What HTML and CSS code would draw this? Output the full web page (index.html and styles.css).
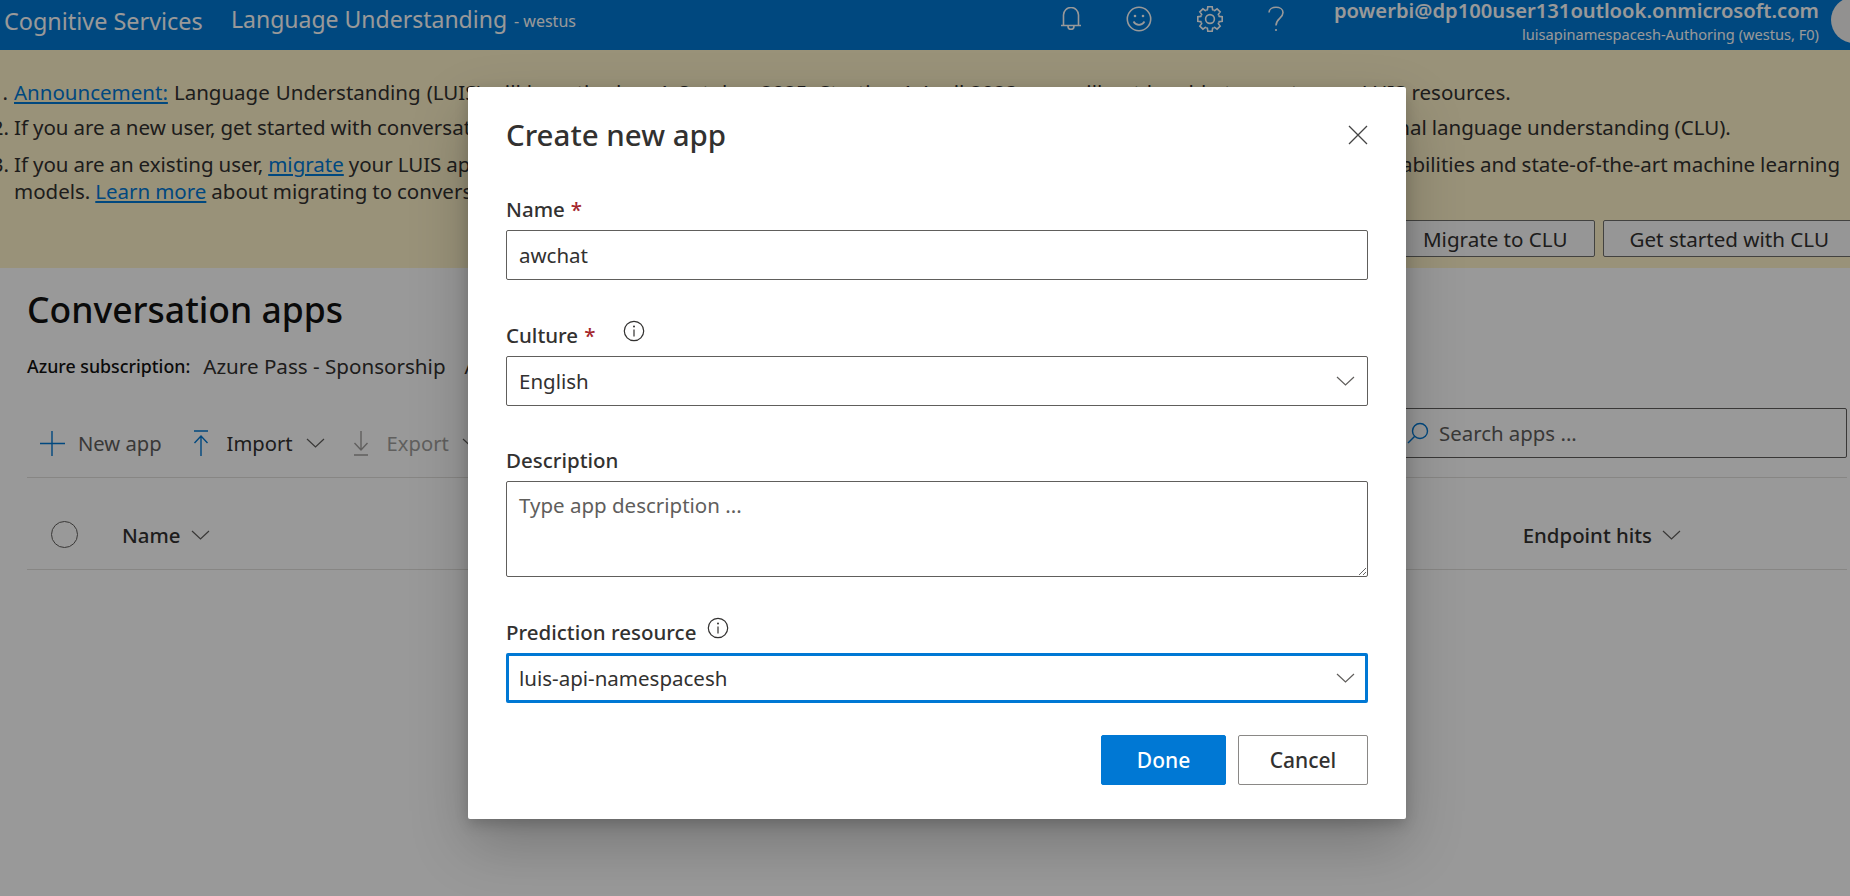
FILE: index.html
```html
<!DOCTYPE html>
<html>
<head>
  <meta charset="utf-8">
  <title>Language Understanding</title>
  <link rel="stylesheet" href="styles.css">
</head>
<body>
  <header class="topbar">
    <span class="brand">Cognitive Services</span>
    <span class="product">Language Understanding</span>
    <span class="region">- westus</span>
    <div class="top-icons">
      <svg class="top-icon" width="20" height="23" viewBox="0 0 20 23"><path d="M2.500 18V8a7.500 7.500 0 0 1 15 0v10M0 18.500h20M7 19c0 4.500 6 4.500 6 0"/></svg>
      <svg class="top-icon" width="26" height="26" viewBox="0 0 26 26"><circle cx="13" cy="13" r="11.700"/><path d="M7.500 15.500c2.500 4.500 8.500 4.500 11 0"/><circle class="dot" cx="9" cy="10" r="1.300"/><circle class="dot" cx="17" cy="10" r="1.300"/></svg>
      <svg class="top-icon" width="26" height="26" viewBox="-13 -13 26 26">
        <defs><path id="tooth" d="M-3.600-8.700L-2.600-9.200-2.200-12.200H2.200L2.600-9.200 3.600-8.700"/></defs>
        <use href="#tooth"/><use href="#tooth" transform="rotate(45)"/><use href="#tooth" transform="rotate(90)"/><use href="#tooth" transform="rotate(135)"/><use href="#tooth" transform="rotate(180)"/><use href="#tooth" transform="rotate(225)"/><use href="#tooth" transform="rotate(270)"/><use href="#tooth" transform="rotate(315)"/>
        <circle cx="0" cy="0" r="4.400"/>
      </svg>
      <svg class="top-icon" width="16" height="26" viewBox="0 0 16 26"><path d="M1 6.500c0-7 14-7 14 0 0 6-7 6-7 13"/><circle class="dot" cx="8" cy="24" r="1.100"/></svg>
    </div>
    <div class="account">
      <div class="account-mail">powerbi@dp100user131outlook.onmicrosoft.com</div>
      <div class="account-res">luisapinamespacesh-Authoring (westus, F0)</div>
    </div>
    <div class="avatar"></div>
  </header>

  <section class="banner">
    <ol class="notes">
      <li><a href="#">Announcement:</a> Language Understanding (LUIS) will be retired on 1 October 2025. Starting 1 April 2023, you will not be able to create new LUIS resources.</li>
      <li class="note-tight">If you are a new user, get started with conversational AI through Azure AI Language, the successor service to LUIS, and its brand new conversational language understanding (CLU).</li>
      <li class="note-tight">If you are an existing user, <a href="#">migrate</a> your LUIS applications to conversational language understanding to benefit from much improved product capabilities and state-of-the-art machine learning models. <a href="#">Learn more</a> about migrating to conversational language understanding.</li>
    </ol>
    <div class="banner-actions">
      <button class="banner-btn">Migrate to CLU</button>
      <button class="banner-btn">Get started with CLU</button>
    </div>
  </section>

  <main class="content">
    <h1 class="page-title">Conversation apps</h1>
    <div class="subscription">
      <b>Azure subscription:</b>
      <span>Azure Pass - Sponsorship</span>
      <span class="authoring">Authoring resource</span>
    </div>
    <div class="toolbar">
      <div class="tool tool-first">
        <svg class="tool-icon blue" width="26" height="26" viewBox="0 0 26 26"><path d="M13 1v25M1 13.500h25"/></svg>
        <span>New app</span>
      </div>
      <div class="tool">
        <svg class="tool-icon blue" width="16" height="26" viewBox="0 0 16 26"><path d="M1 1h14M8 26V6M1.500 13L8 6l6.500 7"/></svg>
        <span class="tool-dark">Import</span>
        <svg class="chev" width="19" height="10" viewBox="0 0 19 10"><path d="M1 1l8.500 8L18 1"/></svg>
      </div>
      <div class="tool disabled">
        <svg class="tool-icon" width="16" height="26" viewBox="0 0 16 26"><path d="M8 1v19M1.500 13L8 20l6.500-7M1 25h14"/></svg>
        <span>Export</span>
        <svg class="chev" width="19" height="10" viewBox="0 0 19 10"><path d="M1 1l8.500 8L18 1"/></svg>
      </div>
      <div class="search">
        <svg class="search-icon" width="22" height="22" viewBox="0 0 22 22"><circle cx="13" cy="9" r="7.500"/><path d="M7.500 14.500L1 21"/></svg>
        <span>Search apps ...</span>
      </div>
    </div>
    <div class="table-head">
      <span class="check"></span>
      <span class="col-name">Name</span>
      <svg class="chev small" width="19" height="10" viewBox="0 0 19 10"><path d="M1 1l8.500 8L18 1"/></svg>
      <span class="col-hits">Endpoint hits</span>
      <svg class="chev small" width="19" height="10" viewBox="0 0 19 10"><path d="M1 1l8.500 8L18 1"/></svg>
    </div>
  </main>

  <div class="overlay"></div>

  <div class="dialog">
    <div class="dialog-head">
      <h2>Create new app</h2>
      <svg class="close" width="20" height="20" viewBox="0 0 20 20"><path d="M1 1l18 18M19 1L1 19"/></svg>
    </div>
    <div class="field">
      <label class="field-label" for="appname">Name <em>*</em></label>
      <input class="control" id="appname" type="text" value="awchat">
    </div>
    <div class="field">
      <label class="field-label">Culture <em>*</em>
        <svg class="info info-far" width="22" height="22" viewBox="0 0 22 22"><circle cx="11" cy="11" r="9.700"/><path d="M11 9.500v7"/><circle class="dot" cx="11" cy="6.500" r="1"/></svg>
      </label>
      <div class="control select">English
        <svg class="chev" width="19" height="10" viewBox="0 0 19 10"><path d="M1 1l8.500 8L18 1"/></svg>
      </div>
    </div>
    <div class="field">
      <label class="field-label" for="appdesc">Description</label>
      <textarea class="control area" id="appdesc" placeholder="Type app description ..."></textarea>
    </div>
    <div class="field field-last">
      <label class="field-label">Prediction resource
        <svg class="info" width="22" height="22" viewBox="0 0 22 22"><circle cx="11" cy="11" r="9.700"/><path d="M11 9.500v7"/><circle class="dot" cx="11" cy="6.500" r="1"/></svg>
      </label>
      <div class="control select focused">luis-api-namespacesh
        <svg class="chev" width="19" height="10" viewBox="0 0 19 10"><path d="M1 1l8.500 8L18 1"/></svg>
      </div>
    </div>
    <div class="dialog-actions">
      <button class="btn primary">Done</button>
      <button class="btn">Cancel</button>
    </div>
  </div>
</body>
</html>
```

FILE: styles.css
```css
* {
  box-sizing: border-box;
}

html, body {
  height: 100%;
  margin: 0;
  overflow: hidden;
}

body {
  font-family: "Noto Sans", "Open Sans", sans-serif;
  background-color: #fff;
  color: #323130;
}

/* top bar */
.topbar {
  display: flex;
  align-items: center;
  height: 50px;
  padding: 0 0 8px 4px;
  background-color: #0078d4;
  color: #fff;
  overflow: hidden;
}

.brand {
  font-size: 23.400px;
  width: 227px;
}

.product {
  font-size: 23px;
  margin-top: -5px;
}

.region {
  font-size: 16px;
  margin-left: 7px;
}

.top-icons {
  display: flex;
  align-items: center;
  gap: 45px;
  margin-left: auto;
  margin-right: 50px;
  margin-top: -5px;
}

.top-icon {
  fill: none;
  stroke: #fff;
  stroke-width: 1.600;
}

.top-icon .dot {
  fill: #fff;
  stroke: none;
}

.account {
  text-align: right;
  margin-top: 6px;
}

.account-mail {
  font-size: 20.200px;
  font-weight: 600;
  line-height: 20px;
}

.account-res {
  font-size: 14.600px;
  line-height: 28px;
}

.avatar {
  flex: none;
  align-self: flex-start;
  width: 46px;
  height: 46px;
  margin-top: -3px;
  margin-left: 12px;
  margin-right: -27px;
  border-radius: 50%;
  background-color: #f3f2f1;
}

/* banner */
.banner {
  display: flex;
  flex-direction: column;
  height: 218px;
  padding: 29px 0 11px 14px;
  background-color: #fff3ca;
  overflow: hidden;
}

.notes {
  margin: 0;
  padding: 0;
  font-size: 20.500px;
  line-height: 27px;
}

.notes li {
  margin-bottom: 8px;
}

.notes li + li {
  margin-bottom: 10px;
}

.notes li:first-child {
  word-spacing: 0.700px;
}

.notes .note-tight {
  word-spacing: -0.400px;
}

.notes a {
  color: #0078d4;
}

.banner-actions {
  display: flex;
  justify-content: flex-end;
  gap: 8px;
  margin-top: auto;
  margin-right: -6px;
}

.banner-btn {
  height: 37px;
  padding: 0 26px;
  font: inherit;
  font-size: 20.600px;
  color: #323130;
  background-color: #fafafa;
  border: 1px solid #6f6e6c;
  border-radius: 2px;
}

/* page content */
.content {
  padding: 0 3px 0 27px;
}

.page-title {
  margin: 17px 0 0;
  font-size: 35.500px;
  line-height: 48px;
  font-weight: 500;
  color: #111;
}

.subscription {
  display: flex;
  align-items: center;
  height: 30px;
  margin-top: 18px;
  font-size: 20.600px;
  color: #323130;
}

.subscription b {
  font-size: 17.800px;
  font-weight: 500;
  color: #111;
  margin-right: 13px;
}

.authoring {
  margin-left: 19px;
}

.toolbar {
  display: flex;
  align-items: center;
  height: 70px;
  margin-top: 27px;
  padding-left: 12px;
  border-bottom: 1px solid #e1dfdd;
  font-size: 20.200px;
}

.tool {
  display: flex;
  align-items: center;
  margin-right: 28px;
  color: #605e5c;
}

.tool-first {
  margin-right: 31px;
}

.tool span {
  margin-left: 13px;
}

.tool .tool-dark {
  margin-left: 18px;
  color: #323130;
}

.tool-icon {
  fill: none;
  stroke-width: 1.400;
  stroke: #a19f9d;
}

.tool-icon.blue {
  stroke: #0078d4;
}

.disabled {
  color: #a19f9d;
}

.disabled span {
  margin-left: 18px;
}

.chev {
  flex: none;
  fill: none;
  stroke: #605e5c;
  stroke-width: 1.200;
}

.tool .chev {
  margin-left: 13px;
}

.search {
  display: flex;
  align-items: center;
  align-self: flex-start;
  width: 560px;
  height: 50px;
  margin-left: auto;
  padding-left: 119px;
  border: 1px solid #605e5c;
  border-radius: 2px;
  font-size: 20.400px;
  color: #605e5c;
}

.search-icon {
  fill: none;
  stroke: #0078d4;
  stroke-width: 1.400;
  margin-right: 10px;
}

.table-head {
  display: flex;
  align-items: center;
  height: 92px;
  padding: 22px 0 0 24px;
  border-bottom: 1px solid #e1dfdd;
  font-size: 20.400px;
  font-weight: 500;
}

.check {
  width: 27px;
  height: 27px;
  border: 1.500px solid #605e5c;
  border-radius: 50%;
  margin-right: 44px;
}

.col-name {
  margin-right: 10px;
}

.col-hits {
  margin-left: auto;
  margin-right: 10px;
}

.table-head .chev:last-child {
  margin-right: 166px;
}

/* dialog */
.overlay {
  position: absolute;
  inset: 0;
  background-color: rgba(0, 0, 0, 0.4);
}

.dialog {
  position: absolute;
  left: 468px;
  top: 87px;
  width: 938px;
  height: 732px;
  padding: 0 38px;
  background-color: #fff;
  border-radius: 2px;
  box-shadow: 0 25px 58px rgba(0, 0, 0, 0.22), 0 5px 14px rgba(0, 0, 0, 0.18);
}

.dialog-head {
  display: flex;
  align-items: center;
  justify-content: space-between;
  height: 96px;
  margin-bottom: 13px;
}

.dialog-head h2 {
  margin: -2px 0 0;
  font-size: 29.500px;
  font-weight: 500;
}

.close {
  fill: none;
  stroke: #444;
  stroke-width: 1.300;
}

.field {
  margin-bottom: 41.600px;
}

.field-last {
  margin-bottom: 0;
}

.field-label {
  display: flex;
  align-items: center;
  height: 26px;
  margin-bottom: 8px;
  font-size: 20.500px;
  font-weight: 500;
}

.field-label em {
  margin-left: 6px;
  font-style: normal;
  color: #a4262c;
}

.info {
  margin-left: 11px;
  margin-top: -8px;
  fill: none;
  stroke: #323130;
  stroke-width: 1.200;
}

.info .dot {
  fill: #323130;
  stroke: none;
}

.info-far {
  margin-left: 28px;
}

.control {
  display: flex;
  align-items: center;
  width: 100%;
  height: 50px;
  padding: 0 12px;
  font-family: inherit;
  font-size: 20.500px;
  color: #323130;
  background-color: #fff;
  border: 1px solid #605e5c;
  border-radius: 2px;
  outline: none;
}

.select {
  justify-content: space-between;
}

.area {
  display: block;
  height: 96px;
  padding-top: 9px;
  resize: both;
}

.area::placeholder {
  color: #605e5c;
}

.focused {
  border: 3px solid #0078d4;
  padding: 0 10px;
}

.dialog-actions {
  display: flex;
  justify-content: flex-end;
  gap: 12px;
  margin-top: 32px;
}

.btn {
  width: 130px;
  height: 50px;
  font-family: inherit;
  font-size: 21px;
  font-weight: 500;
  color: #323130;
  background-color: #fff;
  border: 1px solid #8a8886;
  border-radius: 2px;
}

.primary {
  width: 125px;
  color: #fff;
  background-color: #0078d4;
  border-color: #0078d4;
}
```
